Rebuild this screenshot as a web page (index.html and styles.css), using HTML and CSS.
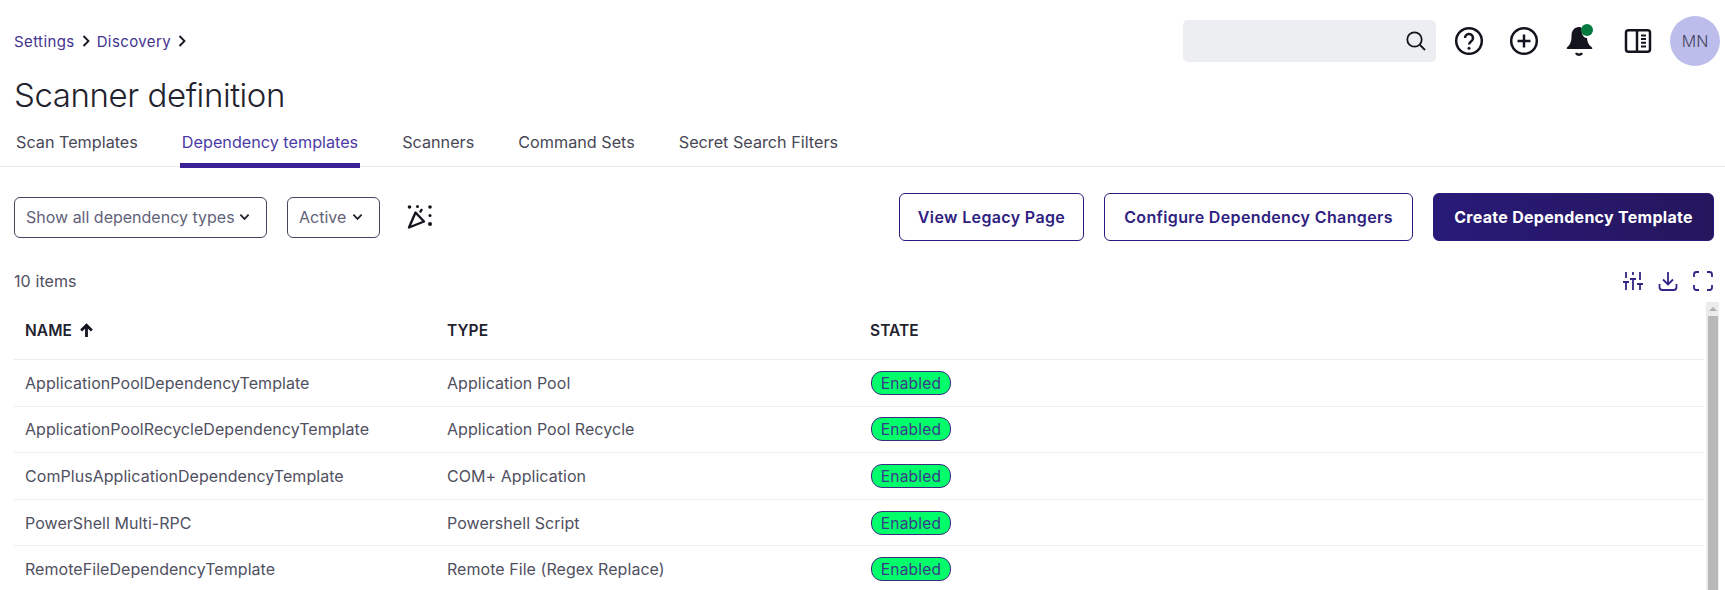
FILE: index.html
```html
<!DOCTYPE html>
<html lang="en">
<head>
<meta charset="utf-8">
<title>Scanner definition</title>
<link rel="stylesheet" href="styles.css">
</head>
<body>
<header class="top">
  <nav class="crumbs">
    <a class="crumb">Settings</a>
    <svg class="crumb-sep" viewBox="0 0 10 14"><path d="M2.5 2 7.5 7 2.5 12"/></svg>
    <a class="crumb">Discovery</a>
    <svg class="crumb-sep" viewBox="0 0 10 14"><path d="M2.5 2 7.5 7 2.5 12"/></svg>
  </nav>
  <div class="top-tools">
    <div class="search">
      <svg class="search-icon" viewBox="0 0 22 22"><circle cx="9.5" cy="9.5" r="7.2"/><path d="m15 15 5 5"/></svg>
    </div>
    <svg class="tool help" viewBox="0 0 30 30"><circle cx="15" cy="15" r="12.8"/><path d="M11 12a4 4 0 1 1 6.3 3.2c-1.4 1-2.3 1.7-2.3 3.3"/><circle class="dot" cx="15" cy="22.3" r="1.5"/></svg>
    <svg class="tool plus" viewBox="0 0 30 30"><circle cx="15" cy="15" r="12.8"/><path d="M15 8.5v13M8.5 15h13"/></svg>
    <svg class="tool bell" viewBox="0 0 32 34"><path class="bell-body" d="M15 3c-5 0-7.500 4-7.500 9 0 7-2 9-4.500 11.500-.6.600-.3 1.500.5 1.500h24c.9 0 1.200-.9.500-1.500C25 21 23.500 19 23 14c-2 .4-6-2-5.200-9.700C17 3.500 16 3 15 3z"/><path class="bell-clap" d="M12 29c1 2.200 5 2.200 6 0"/><circle class="bell-dot" cx="23" cy="6" r="6"/></svg>
    <svg class="tool panel" viewBox="0 0 30 30"><rect x="3" y="4.200" width="24" height="21.600" rx="2.500"/><path d="M14 4.200v21.600"/><path class="panel-lines" d="M18 9.500h5M18 13h5M18 16.800h5M18 20.500h5"/></svg>
    <div class="avatar">MN</div>
  </div>
</header>

<h1 class="title">Scanner definition</h1>

<nav class="tabs">
  <a class="tab">Scan Templates</a>
  <a class="tab tab-active">Dependency templates</a>
  <a class="tab">Scanners</a>
  <a class="tab">Command Sets</a>
  <a class="tab">Secret Search Filters</a>
</nav>

<main class="content">
  <section class="toolbar">
    <div class="filters">
      <div class="select select-type">Show all dependency types
        <svg class="chev" viewBox="0 0 12 8"><path d="M1.500 1.500 6 6l4.500-4.500"/></svg>
      </div>
      <div class="select select-state">Active
        <svg class="chev" viewBox="0 0 12 8"><path d="M1.500 1.500 6 6l4.500-4.500"/></svg>
      </div>
      <svg class="party" viewBox="0 0 26 26"><path class="party-cone" d="M8.500 8.500 2 23.500l15-6z"/><path class="party-cone" d="M13 8.500 15 5"/><circle cx="2.500" cy="3" r="1.800"/><circle cx="10.500" cy="2.500" r="1.500"/><circle cx="23" cy="3" r="1.800"/><circle cx="23" cy="11.500" r="1.500"/><circle cx="23" cy="20" r="2"/></svg>
    </div>
    <div class="actions">
      <button class="btn btn-legacy">View Legacy Page</button>
      <button class="btn btn-config">Configure Dependency Changers</button>
      <button class="btn btn-create">Create Dependency Template</button>
    </div>
  </section>

  <section class="meta">
    <span class="count">10 items</span>
    <div class="meta-icons">
      <svg class="micon" viewBox="0 0 22 22"><path d="M4 2v6M4 12v8M11 2v3M11 9v11M18 2v8M18 14v6M1 12h6M8 9h6M15 14h6"/></svg>
      <svg class="micon" viewBox="0 0 22 22"><path d="M11 2v12M6 9.500l5 5 5-5M2.500 14v3a3 3 0 0 0 3 3h11a3 3 0 0 0 3-3v-3"/></svg>
      <svg class="micon" viewBox="0 0 22 22"><path d="M7 2H4.500A2.500 2.500 0 0 0 2 4.500V7M15 2h2.500A2.500 2.500 0 0 1 20 4.500V7M7 20H4.500A2.500 2.500 0 0 1 2 17.500V15M15 20h2.500a2.500 2.500 0 0 0 2.500-2.500V15"/></svg>
    </div>
  </section>

  <section class="table-area">
    <div class="table">
      <div class="row row-head">
        <div class="cell">NAME
          <svg class="sort" viewBox="0 0 12 14"><path d="M6 13V2M1 7l5-5 5 5"/></svg>
        </div>
        <div class="cell">TYPE</div>
        <div class="cell">STATE</div>
      </div>
      <div class="row"><div class="cell">ApplicationPoolDependencyTemplate</div><div class="cell">Application Pool</div><div class="cell"><span class="badge">Enabled</span></div></div>
      <div class="row"><div class="cell">ApplicationPoolRecycleDependencyTemplate</div><div class="cell">Application Pool Recycle</div><div class="cell"><span class="badge">Enabled</span></div></div>
      <div class="row"><div class="cell">ComPlusApplicationDependencyTemplate</div><div class="cell">COM+ Application</div><div class="cell"><span class="badge">Enabled</span></div></div>
      <div class="row"><div class="cell">PowerShell Multi-RPC</div><div class="cell">Powershell Script</div><div class="cell"><span class="badge">Enabled</span></div></div>
      <div class="row"><div class="cell">RemoteFileDependencyTemplate</div><div class="cell">Remote File (Regex Replace)</div><div class="cell"><span class="badge">Enabled</span></div></div>
    </div>
    <div class="scrollbar">
      <div class="scroll-arrow"></div>
      <div class="scroll-thumb"></div>
    </div>
  </section>
</main>
</body>
</html>
```
FILE: styles.css
```css
* { box-sizing: border-box; }
html, body { margin: 0; height: 590px; overflow: hidden; background: #fff; }
body { padding-top: 16px; font-family: Inter, "Noto Sans", sans-serif; color: #45455a; font-size: 16px; }

.top { display: flex; justify-content: space-between; align-items: center; height: 50px; padding: 0 5px 0 14px; }

.crumbs { display: flex; align-items: center; gap: 6px; }
.crumb { color: #43338f; font-size: 15px; font-weight: 400; letter-spacing: 0.4px; }
.crumb-sep { width: 10px; height: 14px; fill: none; stroke: #14141f; stroke-width: 1.800; }

.top-tools { display: flex; align-items: center; }
.search { width: 253px; height: 42px; background: #edeef2; border-radius: 5px; display: flex; align-items: center; justify-content: flex-end; padding-right: 9px; margin-right: 18px; }
.search-icon { width: 22px; height: 22px; fill: none; stroke: #14141f; stroke-width: 1.800; }
.tool { width: 30px; height: 30px; fill: none; stroke: #14141f; stroke-width: 2.500; flex: none; }
.help { margin-right: 25px; }
.plus { margin-right: 25px; }
.bell { width: 32px; height: 34px; margin-right: 27px; stroke: none; }
.dot { fill: #14141f; stroke: none; }
.bell-body { fill: #14141f; }
.bell-clap { fill: none; stroke: #14141f; stroke-width: 2.500; }
.bell-dot { fill: #047a3e; }
.panel-lines { stroke-width: 2; }
.panel { margin-right: 17px; }
.avatar { width: 50px; height: 50px; border-radius: 50%; background: #bdbdeb; color: #45455f; display: flex; align-items: center; justify-content: center; font-size: 16px; font-weight: 300; }

.title { margin: 7px 0 0 14px; height: 44px; line-height: 44px; font-size: 33px; font-weight: 300; color: #22222e; letter-spacing: -0.42px; }

.tabs { display: flex; gap: 40px; height: 50px; padding: 5px 0 0 14px; border-bottom: 1px solid #e9e9ee; }
.tab { height: 46px; padding: 0 2px; line-height: 40px; font-size: 16.200px; color: #474756; margin-bottom: -1px; border-bottom: 5px solid transparent; }
.tab-active { color: #4b3ba6; border-bottom-color: #3a2096; }

.content { padding: 26px 11px 0 14px; }

.toolbar { display: flex; justify-content: space-between; align-items: center; height: 48px; }
.filters { display: flex; align-items: center; }
.select { height: 41px; border: 1px solid #45455f; border-radius: 6px; display: flex; align-items: center; justify-content: space-between; padding: 0 16px 0 11px; font-size: 16px; color: #62627a; }
.select-type { width: 253px; margin-right: 20px; }
.select-state { width: 93px; margin-right: 27px; }
.chev { width: 11px; height: 8px; fill: none; stroke: #22222e; stroke-width: 2; flex: none; }
.party { width: 26px; height: 26px; fill: #14141f; }
.party-cone { fill: none; stroke: #14141f; stroke-width: 2.400; stroke-linejoin: round; }

.actions { display: flex; gap: 20px; }
.btn { height: 48px; border-radius: 6px; font-family: inherit; font-size: 16px; font-weight: 600; letter-spacing: 0.36px; padding: 0; border: 1px solid #2b1a7d; background: #fff; color: #2f2180; }
.btn-legacy { width: 185px; }
.btn-config { width: 309px; }
.btn-create { width: 281px; color: #fff; font-weight: 700; letter-spacing: 0.28px; background: linear-gradient(90deg, #281a78, #26165e); border-color: #281a78; }

.meta { display: flex; justify-content: space-between; align-items: center; height: 26px; margin-top: 27px; }
.count { font-size: 16px; letter-spacing: 0.1px; color: #50505f; }
.meta-icons { display: flex; gap: 13px; }
.micon { width: 22px; height: 22px; fill: none; stroke: #352487; stroke-width: 1.800; }

.table-area { display: flex; align-items: flex-start; gap: 2px; margin: 8px -5px 0 0; }
.table { flex: 1; }
.row { display: grid; grid-template-columns: 422px 423px 1fr; align-items: center; height: 46.600px; padding-left: 11px; border-bottom: 1px solid #ececf1; font-size: 16px; letter-spacing: 0.05px; color: #50505f; }
.row-head { height: 58px; padding-bottom: 1px; font-size: 15.500px; font-weight: 600; color: #22222e; }
.cell { display: flex; align-items: center; gap: 8px; }
.sort { width: 13px; height: 15px; fill: none; stroke: #14141f; stroke-width: 2.600; }
.badge { margin-left: 1px; width: 80px; height: 24px; padding-top: 1px; border-radius: 11px; border: 1px solid #3a2a80; background: #00ff6a; color: #3a3a8a; font-size: 15.500px; letter-spacing: 0.2px; display: flex; align-items: center; justify-content: center; }

.scrollbar { width: 13px; height: 288px; background: #ececec; display: flex; flex-direction: column; align-items: center; }
.scroll-arrow { width: 0; height: 0; margin: 5px 0 5px; border-left: 4px solid transparent; border-right: 4px solid transparent; border-bottom: 4px solid #b0b0b0; }
.scroll-thumb { width: 10px; flex: 1; background: #b8b8b8; }
```
